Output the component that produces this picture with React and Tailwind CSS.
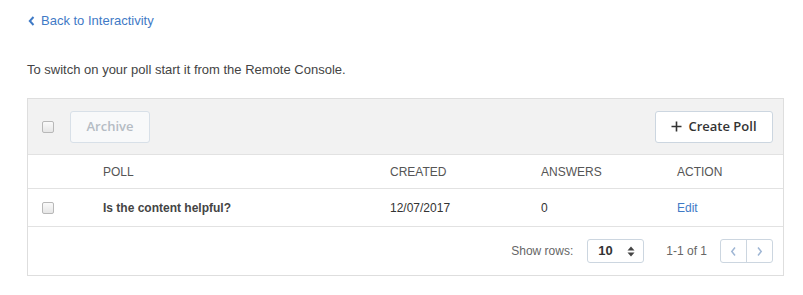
import React from 'react';

function Checkbox() {
  return (
    <span className="inline-block w-[12px] h-[12px] rounded-[2px] border border-[#b8b8b8] bg-gradient-to-b from-[#fafafa] to-[#e6e6e6] align-middle" />
  );
}

export default function App() {
  const polls = [{ question: 'Is the content helpful?', created: '12/07/2017', answers: 0 }];

  return (
    <div className="w-[803px] h-[295px] bg-white font-['Liberation_Sans',Arial,sans-serif] text-[#333]">
      <div className="pl-[27px] pt-[12px]">
        {/* Back link */}
        <a className="flex items-center gap-[6px] text-[13px] text-[#3f7ac6] h-[18px]">
          <svg width="7" height="10" viewBox="0 0 7 10" className="ml-[1px]">
            <path d="M5.5 1 L1.8 5 L5.5 9" fill="none" stroke="#3f7ac6" strokeWidth="2" />
          </svg>
          <span>Back to Interactivity</span>
        </a>

        <p className="mt-[31px] text-[13px] text-[#444] leading-[18px]">
          To switch on your poll start it from the Remote Console.
        </p>

        {/* Table */}
        <div className="mt-[19px] w-[757px] border border-[#dedede]">
          {/* Toolbar */}
          <div className="h-[56px] bg-[#f2f2f2] border-b border-[#e2e2e2] flex items-center pl-[14px] pr-[10px]">
            <Checkbox />
            <button className="ml-[16px] w-[80px] h-[32px] rounded-[3px] border border-[#d8e0e8] bg-[#f8f9fa] text-[13px] text-[#b5bcc4] font-['Open_Sans',sans-serif] font-semibold">
              Archive
            </button>
            <button className="ml-auto w-[118px] h-[32px] rounded-[3px] border border-[#ccd6e0] bg-white text-[13px] text-[#333] font-['Open_Sans',sans-serif] font-semibold flex items-center justify-center gap-[6px]">
              <svg width="11" height="11" viewBox="0 0 11 11">
                <path d="M5.5 0.5 V10.5 M0.5 5.5 H10.5" stroke="#333" strokeWidth="1.6" />
              </svg>
              Create Poll
            </button>
          </div>

          {/* Column headers */}
          <div className="h-[34px] flex items-center border-b border-[#e2e2e2] text-[12px] text-[#555]">
            <div className="w-[75px]" />
            <div className="w-[287px]">POLL</div>
            <div className="w-[151px]">CREATED</div>
            <div className="w-[136px]">ANSWERS</div>
            <div className="flex-1">ACTION</div>
          </div>

          {/* Rows */}
          {polls.map((poll) => (
            <div key={poll.question} className="h-[38px] flex items-center border-b border-[#e2e2e2] text-[12px] text-[#333]">
              <div className="w-[75px] pl-[14px] flex items-center">
                <Checkbox />
              </div>
              <div className="w-[287px] font-bold text-[#444]">{poll.question}</div>
              <div className="w-[151px]">{poll.created}</div>
              <div className="w-[136px]">{poll.answers}</div>
              <div className="flex-1 text-[#3f7ac6]">Edit</div>
            </div>
          ))}

          {/* Footer */}
          <div className="h-[48px] flex items-center justify-end pr-[10px] text-[12px] text-[#666]">
            <span>Show rows:</span>
            <div className="ml-[14px] w-[57px] h-[24px] rounded-[3px] border border-[#ccd6e0] flex items-center justify-between pl-[10px] pr-[8px]">
              <span className="font-bold text-[13px] text-[#333]">10</span>
              <svg width="8" height="11" viewBox="0 0 8 11">
                <path d="M4 0.5 L7.5 4.5 H0.5 Z M4 10.5 L7.5 6.5 H0.5 Z" fill="#444" />
              </svg>
            </div>
            <span className="ml-[22px]">1-1 of 1</span>
            <div className="ml-[13px] w-[53px] h-[24px] rounded-[3px] border border-[#ccd6e0] flex">
              <div className="flex-1 flex items-center justify-center border-r border-[#ccd6e0]">
                <svg width="7" height="11" viewBox="0 0 7 11">
                  <path d="M5 1.5 L1.8 5.5 L5 9.5" fill="none" stroke="#9fb6d4" strokeWidth="1.5" />
                </svg>
              </div>
              <div className="flex-1 flex items-center justify-center">
                <svg width="7" height="11" viewBox="0 0 7 11">
                  <path d="M2 1.5 L5.2 5.5 L2 9.5" fill="none" stroke="#9fb6d4" strokeWidth="1.5" />
                </svg>
              </div>
            </div>
          </div>
        </div>
      </div>
    </div>
  );
}
